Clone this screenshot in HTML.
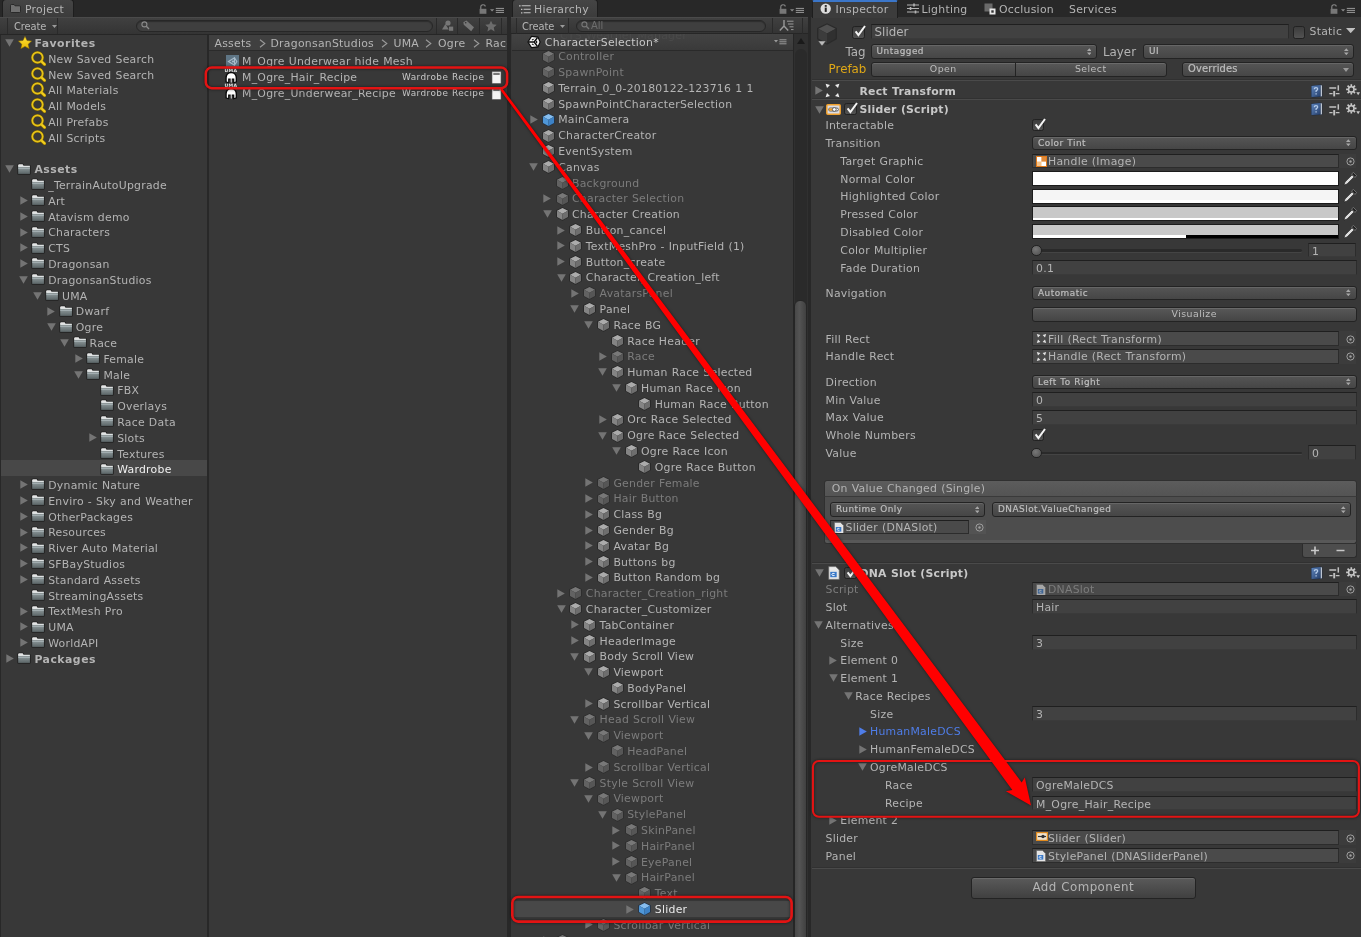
<!DOCTYPE html><html><head><meta charset="utf-8"><title>Unity Editor</title><style>
*{box-sizing:border-box}
html,body{margin:0;padding:0}
body{width:1361px;height:937px;overflow:hidden;background:#282828;position:relative;
font:10.87px "DejaVu Sans","Liberation Sans",sans-serif;color:#b4b4b4;letter-spacing:.26px;word-spacing:.3px}
#root{left:0;top:0;width:1361px;height:937px;will-change:transform}
div,span,svg{position:absolute}
span{white-space:nowrap;margin-top:.9px}
.b{letter-spacing:.22px}
.pan{background:#383838;overflow:hidden}
.r{left:0;right:0;height:15.75px;line-height:15.75px}
.ir{left:0;right:0;height:17.78px;line-height:17.78px}
.dim{color:#7c7c7c}
.b{font-weight:bold}
.tab{top:-1px;height:19px;border:1px solid #1e1e1e;border-bottom:0;border-radius:4px 4px 0 0;background:linear-gradient(#454545,#3b3b3b);line-height:16px}
.tb{left:0;right:0;top:17px;height:17.5px;background:linear-gradient(#404040,#343434);border-top:1px solid #4a4a4a;border-bottom:1px solid #262626;line-height:15px;font-size:9.9px;letter-spacing:-.08px}
.sf{border-radius:7px;background:#3f3f3f;border:1px solid #272727;box-shadow:inset 0 1px 1px #2d2d2d}
.tf{background:#414141;border:1px solid #2c2c2c;border-top-color:#1f1f1f;border-bottom-color:#3a3a3a;height:14.8px;line-height:16px;padding-left:3px;color:#b4b4b4}
.pop{background:linear-gradient(#555,#464646);border:1px solid #232323;border-radius:3px;height:14.6px;line-height:12.4px;font-size:8.9px;letter-spacing:.35px;padding-left:5px;color:#bebebe;box-shadow:inset 0 1px 0 #666;-webkit-text-stroke:.2px #bebebe;letter-spacing:.5px}
.btn{background:linear-gradient(#585858,#454545);border:1px solid #232323;border-radius:3px;height:14.6px;line-height:12.4px;font-size:9.4px;letter-spacing:.45px;text-align:center;color:#bebebe;box-shadow:inset 0 1px 0 #6a6a6a}
.cb{width:12.4px;height:12.4px;border:1px solid #222;border-radius:2.5px;background:linear-gradient(#3c3c3c,#525252)}
.sep{left:0;right:0;height:1px;background:#313131;box-shadow:0 1px 0 #4a4a4a}
.of{background:#4a4a4a;border:1px solid #2c2c2c;border-top-color:#1f1f1f;height:14.8px;line-height:13px;overflow:hidden}
.col{height:14.9px;border:1px solid #1c1c1c}
</style></head><body>
<div id="root">

<svg width="0" height="0" style="left:0;top:0"><defs>
<linearGradient id="fg" x1="0" y1="0" x2="0" y2="1"><stop offset="0" stop-color="#919c9e"/><stop offset="1" stop-color="#5b6567"/></linearGradient>
<linearGradient id="yg" x1="0" y1="0" x2="0" y2="1"><stop offset="0" stop-color="#ffe23a"/><stop offset="1" stop-color="#e9b900"/></linearGradient>
<symbol id="cube" viewBox="0 0 13 14"><path d="M6.5 .2 12.8 3.2V10.3L6.5 13.8 .2 10.3V3.2Z" fill="#262626"/><path d="M6.5 1 12 3.7 6.5 6.7 1 3.7Z" fill="#ababab"/><path d="M1 3.7 6.5 6.7V13L1 9.9Z" fill="#848484"/><path d="M12 3.7 6.5 6.7V13L12 9.9Z" fill="#6e6e6e"/></symbol>
<symbol id="cubed" viewBox="0 0 13 14"><path d="M6.5 .2 12.8 3.2V10.3L6.5 13.8 .2 10.3V3.2Z" fill="#2c2c2c"/><path d="M6.5 1 12 3.7 6.5 6.7 1 3.7Z" fill="#787878"/><path d="M1 3.7 6.5 6.7V13L1 9.9Z" fill="#626262"/><path d="M12 3.7 6.5 6.7V13L12 9.9Z" fill="#565656"/></symbol>
<symbol id="cubeb" viewBox="0 0 13 14"><path d="M6.5 .2 12.8 3.2V10.3L6.5 13.8 .2 10.3V3.2Z" fill="#223244"/><path d="M6.5 1 12 3.7 6.5 6.7 1 3.7Z" fill="#86bdee"/><path d="M1 3.7 6.5 6.7V13L1 9.9Z" fill="#4f97d8"/><path d="M12 3.7 6.5 6.7V13L12 9.9Z" fill="#3d82c6"/></symbol>
<symbol id="cubek" viewBox="0 0 13 14"><path d="M6.5 .2 12.8 3.2V10.3L6.5 13.8 .2 10.3V3.2Z" fill="#2a2a2a"/><path d="M6.5 1 12 3.7 6.5 6.7 1 3.7Z" fill="#505050"/><path d="M1 3.7 6.5 6.7V13L1 9.9Z" fill="#3c3c3c"/><path d="M12 3.7 6.5 6.7V13L12 9.9Z" fill="#303030"/></symbol>
<symbol id="fold" viewBox="0 0 14 12"><path d="M.3 2.3Q.3 .4 2 .4H5.6Q6.8 .4 7.1 1.9H12.4Q13.8 1.9 13.8 3.2V10.4Q13.8 11.8 12.4 11.8H1.7Q.3 11.8 .3 10.4Z" fill="#212121"/><path d="M1.2 2.2Q1.2 1.2 2.2 1.2H5.3Q6 1.2 6.2 2.2V3.2H1.2Z" fill="#e6e6e6"/><rect x="1.2" y="2.7" width="11.7" height="1.8" fill="#dde1e2"/><rect x="1.2" y="4.2" width="11.7" height="6.7" fill="url(#fg)"/><rect x="1.2" y="4.9" width="11.7" height=".8" fill="#aebabc"/></symbol>
<symbol id="tr" viewBox="0 0 8 9"><path d="M.3 .2 7.8 4.5 .3 8.8Z" fill="#747474"/></symbol>
<symbol id="td" viewBox="0 0 9 8"><path d="M.2 .3H8.8L4.5 7.8Z" fill="#747474"/></symbol>
<symbol id="mag" viewBox="0 0 15 15"><path d="M10.5 10.5 13.6 13.4" stroke="#8a6d00" stroke-width="3.4" stroke-linecap="round"/><circle cx="6.5" cy="6.5" r="5.2" fill="none" stroke="#7a6000" stroke-width="2.6"/><path d="M10.5 10.5 13.6 13.4" stroke="#f2cf1f" stroke-width="2.2" stroke-linecap="round"/><circle cx="6.5" cy="6.5" r="5.2" fill="none" stroke="#e6c31a" stroke-width="1.7"/></symbol>
<symbol id="star" viewBox="0 0 14 13"><path d="M7 .3 9 4.5 13.7 5 10.2 8.2 11.2 12.8 7 10.4 2.8 12.8 3.8 8.2 .3 5 5 4.5Z" fill="url(#yg)" stroke="#7a5e00" stroke-width=".5"/></symbol>
</defs></svg>

<div class="pan" style="left:0;top:0;width:507px;height:937px;background:#282828">
<div class="tab" style="left:2px;width:72px"><span style="left:22px;top:1px">Project</span><svg style="left:7px;top:4px" width="11" height="9" viewBox="0 0 11 9"><path d="M.5 1.5Q.5 .5 1.5 .5H4L5 1.8H9.5Q10.5 1.8 10.5 2.8V7.5Q10.5 8.5 9.5 8.5H1.5Q.5 8.5 .5 7.5Z" fill="#6f6f6f" stroke="#1e1e1e" stroke-width=".8"/></svg></div>
<svg style="left:479px;top:4px" width="28" height="11" viewBox="0 0 28 11"><path d="M1.8 5V3Q1.8 .8 4 .8Q6.2 .8 6.2 2.6" fill="none" stroke="#8a8a8a" stroke-width="1.1"/><rect x=".6" y="4.8" width="6.8" height="5" fill="#777"/><path d="M11 5.2H15.2L13.1 7.6Z" fill="#8a8a8a"/><path d="M16.8 4.4H25M16.8 6.4H25M16.8 8.4H25" stroke="#9a9a9a" stroke-width="1"/></svg>
<div class="tb"><div style="left:7px;top:0;width:51px;height:16px;border-left:1px solid #2a2a2a;border-right:1px solid #2a2a2a"></div><span style="left:14px;top:0">Create</span><svg style="left:52px;top:6.5px" width="5" height="3" viewBox="0 0 5 3"><path d="M0 0H5L2.5 3Z" fill="#9a9a9a"/></svg><div class="sf" style="left:136px;top:1.5px;width:297px;height:12.5px"></div><svg style="left:141px;top:3px" width="9" height="9" viewBox="0 0 9 9"><circle cx="3.4" cy="3.4" r="2.5" fill="none" stroke="#8a8a8a" stroke-width="1.1"/><path d="M5.3 5.3 8 8" stroke="#8a8a8a" stroke-width="1.3"/></svg><div style="left:435.5px;top:0;width:1px;height:16px;background:#2a2a2a"></div><div style="left:457px;top:0;width:1px;height:16px;background:#2a2a2a"></div><div style="left:479px;top:0;width:1px;height:16px;background:#2a2a2a"></div><div style="left:501px;top:0;width:1px;height:16px;background:#2a2a2a"></div><svg style="left:442px;top:2px" width="12" height="12" viewBox="0 0 12 12"><circle cx="6" cy="3" r="2.6" fill="#767676"/><path d="M0 9.5 3.4 4 6.8 9.5Z" fill="#767676"/><rect x="7" y="6.6" width="4.2" height="4.2" fill="#767676"/></svg><svg style="left:463px;top:2px" width="12" height="12" viewBox="0 0 12 12"><path d="M.3 2.2 3.4 .6 11 7.2 8.2 11.2 .8 4.8Z" fill="#767676"/><circle cx="2.7" cy="2.7" r=".8" fill="#333"/></svg><svg style="left:485px;top:2px" width="12" height="12" viewBox="0 0 14 13"><path d="M7 .3 9 4.5 13.7 5 10.2 8.2 11.2 12.8 7 10.4 2.8 12.8 3.8 8.2 .3 5 5 4.5Z" fill="#6c6c6c"/></svg></div>
<div style="left:1px;top:35px;width:206px;height:902px;background:#383838">
<div class="r" style="top:-1.10px">
<svg style="left:4.2px;top:5.2px" width="9" height="8"><use href="#td"/></svg>
<svg style="left:17.0px;top:2.0px" width="14" height="13"><use href="#star"/></svg>
<span class="b"  style="top:1.2px;left:33.4px;letter-spacing:.5px">Favorites</span>
</div>
<div class="r" style="top:14.69px">
<svg style="left:30.0px;top:1.2px" width="15" height="15"><use href="#mag"/></svg>
<span style="top:1.2px;left:47.2px">New Saved Search</span>
</div>
<div class="r" style="top:30.48px">
<svg style="left:30.0px;top:1.2px" width="15" height="15"><use href="#mag"/></svg>
<span style="top:1.2px;left:47.2px">New Saved Search</span>
</div>
<div class="r" style="top:46.27px">
<svg style="left:30.0px;top:1.2px" width="15" height="15"><use href="#mag"/></svg>
<span style="top:1.2px;left:47.2px">All Materials</span>
</div>
<div class="r" style="top:62.06px">
<svg style="left:30.0px;top:1.2px" width="15" height="15"><use href="#mag"/></svg>
<span style="top:1.2px;left:47.2px">All Models</span>
</div>
<div class="r" style="top:77.85px">
<svg style="left:30.0px;top:1.2px" width="15" height="15"><use href="#mag"/></svg>
<span style="top:1.2px;left:47.2px">All Prefabs</span>
</div>
<div class="r" style="top:93.64px">
<svg style="left:30.0px;top:1.2px" width="15" height="15"><use href="#mag"/></svg>
<span style="top:1.2px;left:47.2px">All Scripts</span>
</div>
<div class="r" style="top:125.22px">
<svg style="left:4.2px;top:5.2px" width="9" height="8"><use href="#td"/></svg>
<svg style="left:16.4px;top:2.4px" width="14" height="12"><use href="#fold"/></svg>
<span class="b"  style="top:1.2px;left:33.4px;letter-spacing:.5px">Assets</span>
</div>
<div class="r" style="top:141.01px">
<svg style="left:30.2px;top:2.4px" width="14" height="12"><use href="#fold"/></svg>
<span style="top:1.2px;left:47.2px">_TerrainAutoUpgrade</span>
</div>
<div class="r" style="top:156.80px">
<svg style="left:18.6px;top:4.2px" width="8" height="9"><use href="#tr"/></svg>
<svg style="left:30.2px;top:2.4px" width="14" height="12"><use href="#fold"/></svg>
<span style="top:1.2px;left:47.2px">Art</span>
</div>
<div class="r" style="top:172.59px">
<svg style="left:18.6px;top:4.2px" width="8" height="9"><use href="#tr"/></svg>
<svg style="left:30.2px;top:2.4px" width="14" height="12"><use href="#fold"/></svg>
<span style="top:1.2px;left:47.2px">Atavism demo</span>
</div>
<div class="r" style="top:188.38px">
<svg style="left:18.6px;top:4.2px" width="8" height="9"><use href="#tr"/></svg>
<svg style="left:30.2px;top:2.4px" width="14" height="12"><use href="#fold"/></svg>
<span style="top:1.2px;left:47.2px">Characters</span>
</div>
<div class="r" style="top:204.17px">
<svg style="left:18.6px;top:4.2px" width="8" height="9"><use href="#tr"/></svg>
<svg style="left:30.2px;top:2.4px" width="14" height="12"><use href="#fold"/></svg>
<span style="top:1.2px;left:47.2px">CTS</span>
</div>
<div class="r" style="top:219.96px">
<svg style="left:18.6px;top:4.2px" width="8" height="9"><use href="#tr"/></svg>
<svg style="left:30.2px;top:2.4px" width="14" height="12"><use href="#fold"/></svg>
<span style="top:1.2px;left:47.2px">Dragonsan</span>
</div>
<div class="r" style="top:235.75px">
<svg style="left:18.0px;top:5.2px" width="9" height="8"><use href="#td"/></svg>
<svg style="left:30.2px;top:2.4px" width="14" height="12"><use href="#fold"/></svg>
<span style="top:1.2px;left:47.2px">DragonsanStudios</span>
</div>
<div class="r" style="top:251.54px">
<svg style="left:31.8px;top:5.2px" width="9" height="8"><use href="#td"/></svg>
<svg style="left:44.0px;top:2.4px" width="14" height="12"><use href="#fold"/></svg>
<span style="top:1.2px;left:61.0px">UMA</span>
</div>
<div class="r" style="top:267.33px">
<svg style="left:46.2px;top:4.2px" width="8" height="9"><use href="#tr"/></svg>
<svg style="left:57.8px;top:2.4px" width="14" height="12"><use href="#fold"/></svg>
<span style="top:1.2px;left:74.8px">Dwarf</span>
</div>
<div class="r" style="top:283.12px">
<svg style="left:45.6px;top:5.2px" width="9" height="8"><use href="#td"/></svg>
<svg style="left:57.8px;top:2.4px" width="14" height="12"><use href="#fold"/></svg>
<span style="top:1.2px;left:74.8px">Ogre</span>
</div>
<div class="r" style="top:298.91px">
<svg style="left:59.4px;top:5.2px" width="9" height="8"><use href="#td"/></svg>
<svg style="left:71.6px;top:2.4px" width="14" height="12"><use href="#fold"/></svg>
<span style="top:1.2px;left:88.6px">Race</span>
</div>
<div class="r" style="top:314.70px">
<svg style="left:73.8px;top:4.2px" width="8" height="9"><use href="#tr"/></svg>
<svg style="left:85.4px;top:2.4px" width="14" height="12"><use href="#fold"/></svg>
<span style="top:1.2px;left:102.4px">Female</span>
</div>
<div class="r" style="top:330.49px">
<svg style="left:73.2px;top:5.2px" width="9" height="8"><use href="#td"/></svg>
<svg style="left:85.4px;top:2.4px" width="14" height="12"><use href="#fold"/></svg>
<span style="top:1.2px;left:102.4px">Male</span>
</div>
<div class="r" style="top:346.28px">
<svg style="left:99.2px;top:2.4px" width="14" height="12"><use href="#fold"/></svg>
<span style="top:1.2px;left:116.2px">FBX</span>
</div>
<div class="r" style="top:362.07px">
<svg style="left:99.2px;top:2.4px" width="14" height="12"><use href="#fold"/></svg>
<span style="top:1.2px;left:116.2px">Overlays</span>
</div>
<div class="r" style="top:377.86px">
<svg style="left:99.2px;top:2.4px" width="14" height="12"><use href="#fold"/></svg>
<span style="top:1.2px;left:116.2px">Race Data</span>
</div>
<div class="r" style="top:393.65px">
<svg style="left:87.6px;top:4.2px" width="8" height="9"><use href="#tr"/></svg>
<svg style="left:99.2px;top:2.4px" width="14" height="12"><use href="#fold"/></svg>
<span style="top:1.2px;left:116.2px">Slots</span>
</div>
<div class="r" style="top:409.44px">
<svg style="left:99.2px;top:2.4px" width="14" height="12"><use href="#fold"/></svg>
<span style="top:1.2px;left:116.2px">Textures</span>
</div>
<div class="r" style="top:425.23px;background:#484848">
<svg style="left:99.2px;top:2.4px" width="14" height="12"><use href="#fold"/></svg>
<span style="color:#f0f0f0;top:1.2px;left:116.2px">Wardrobe</span>
</div>
<div class="r" style="top:441.02px">
<svg style="left:18.6px;top:4.2px" width="8" height="9"><use href="#tr"/></svg>
<svg style="left:30.2px;top:2.4px" width="14" height="12"><use href="#fold"/></svg>
<span style="top:1.2px;left:47.2px">Dynamic Nature</span>
</div>
<div class="r" style="top:456.81px">
<svg style="left:18.6px;top:4.2px" width="8" height="9"><use href="#tr"/></svg>
<svg style="left:30.2px;top:2.4px" width="14" height="12"><use href="#fold"/></svg>
<span style="top:1.2px;left:47.2px">Enviro - Sky and Weather</span>
</div>
<div class="r" style="top:472.60px">
<svg style="left:18.6px;top:4.2px" width="8" height="9"><use href="#tr"/></svg>
<svg style="left:30.2px;top:2.4px" width="14" height="12"><use href="#fold"/></svg>
<span style="top:1.2px;left:47.2px">OtherPackages</span>
</div>
<div class="r" style="top:488.39px">
<svg style="left:18.6px;top:4.2px" width="8" height="9"><use href="#tr"/></svg>
<svg style="left:30.2px;top:2.4px" width="14" height="12"><use href="#fold"/></svg>
<span style="top:1.2px;left:47.2px">Resources</span>
</div>
<div class="r" style="top:504.18px">
<svg style="left:18.6px;top:4.2px" width="8" height="9"><use href="#tr"/></svg>
<svg style="left:30.2px;top:2.4px" width="14" height="12"><use href="#fold"/></svg>
<span style="top:1.2px;left:47.2px">River Auto Material</span>
</div>
<div class="r" style="top:519.97px">
<svg style="left:18.6px;top:4.2px" width="8" height="9"><use href="#tr"/></svg>
<svg style="left:30.2px;top:2.4px" width="14" height="12"><use href="#fold"/></svg>
<span style="top:1.2px;left:47.2px">SFBayStudios</span>
</div>
<div class="r" style="top:535.76px">
<svg style="left:18.6px;top:4.2px" width="8" height="9"><use href="#tr"/></svg>
<svg style="left:30.2px;top:2.4px" width="14" height="12"><use href="#fold"/></svg>
<span style="top:1.2px;left:47.2px">Standard Assets</span>
</div>
<div class="r" style="top:551.55px">
<svg style="left:30.2px;top:2.4px" width="14" height="12"><use href="#fold"/></svg>
<span style="top:1.2px;left:47.2px">StreamingAssets</span>
</div>
<div class="r" style="top:567.34px">
<svg style="left:18.6px;top:4.2px" width="8" height="9"><use href="#tr"/></svg>
<svg style="left:30.2px;top:2.4px" width="14" height="12"><use href="#fold"/></svg>
<span style="top:1.2px;left:47.2px">TextMesh Pro</span>
</div>
<div class="r" style="top:583.13px">
<svg style="left:18.6px;top:4.2px" width="8" height="9"><use href="#tr"/></svg>
<svg style="left:30.2px;top:2.4px" width="14" height="12"><use href="#fold"/></svg>
<span style="top:1.2px;left:47.2px">UMA</span>
</div>
<div class="r" style="top:598.92px">
<svg style="left:18.6px;top:4.2px" width="8" height="9"><use href="#tr"/></svg>
<svg style="left:30.2px;top:2.4px" width="14" height="12"><use href="#fold"/></svg>
<span style="top:1.2px;left:47.2px">WorldAPI</span>
</div>
<div class="r" style="top:614.71px">
<svg style="left:4.8px;top:4.2px" width="8" height="9"><use href="#tr"/></svg>
<svg style="left:16.4px;top:2.4px" width="14" height="12"><use href="#fold"/></svg>
<span class="b"  style="top:1.2px;left:33.4px;letter-spacing:.5px">Packages</span>
</div>
</div>
<div style="left:208.5px;top:35px;width:298.5px;height:902px;background:#383838">
<div style="left:0;top:0;right:0;height:16px;background:#404040;border-bottom:1px solid #2b2b2b;line-height:15.5px;overflow:hidden">
<span style="left:6px">Assets</span>
<span style="left:62px">DragonsanStudios</span>
<span style="left:185px">UMA</span>
<span style="left:229.5px">Ogre</span>
<span style="left:277px">Race</span>
<svg style="left:50.5px;top:4px" width="7" height="9" viewBox="0 0 7 9"><path d="M1 .8 5.8 4.5 1 8.2" fill="none" stroke="#9a9a9a" stroke-width="1.1"/></svg>
<svg style="left:172.5px;top:4px" width="7" height="9" viewBox="0 0 7 9"><path d="M1 .8 5.8 4.5 1 8.2" fill="none" stroke="#9a9a9a" stroke-width="1.1"/></svg>
<svg style="left:216.5px;top:4px" width="7" height="9" viewBox="0 0 7 9"><path d="M1 .8 5.8 4.5 1 8.2" fill="none" stroke="#9a9a9a" stroke-width="1.1"/></svg>
<svg style="left:264.5px;top:4px" width="7" height="9" viewBox="0 0 7 9"><path d="M1 .8 5.8 4.5 1 8.2" fill="none" stroke="#9a9a9a" stroke-width="1.1"/></svg>
</div>
<div class="r" style="top:18.50px">
<svg style="left:17.5px;top:1.5px" width="13" height="13" viewBox="0 0 13 13"><rect width="13" height="13" fill="#5f7686"/><path d="M2.5 6.5 8.5 2.8V10.2Z M8.5 2.8 10.8 6.5 8.5 10.2" fill="none" stroke="#a9bccb" stroke-width="1.1"/><circle cx="7" cy="6.5" r="1.1" fill="#a9bccb"/></svg>
<span style="left:33.5px">M_Ogre Underwear hide Mesh</span>
</div>
<div class="r" style="top:34.25px">
<svg style="left:16.6px;top:3.2px" width="12.4" height="11.6" viewBox="0 0 12 11"><path d="M6 0C2.4 0 .4 2.4 .4 5.6V9.9L4.1 11V7.4H5V10.6H7V7.4H7.9V11L11.6 9.9V5.6C11.6 2.4 9.6 0 6 0Z" fill="#0a0a0a"/><path d="M6 1.2C3.2 1.2 1.7 3.1 1.7 5.7V9.1L3 9.5V6.2H9V9.5L10.3 9.1V5.7C10.3 3.1 8.8 1.2 6 1.2Z" fill="#fff"/><rect x="5.5" y="5.6" width="1" height="4.6" fill="#fff"/></svg>
<span style="left:16px;top:-6.6px;font-size:4.6px;font-weight:bold;color:#f2f2f2;letter-spacing:.3px;margin:0">UMA</span>
<span style="left:33.5px">M_Ogre_Hair_Recipe</span>
<span style="left:193.5px;font-size:8.9px;letter-spacing:.45px;color:#c8c8c8">Wardrobe Recipe</span>
<svg style="left:282px;top:1.5px" width="11" height="13" viewBox="0 0 11 13"><path d="M1 .5H10V12.5H1Z" fill="#f4f4f4" stroke="#555" stroke-width=".6"/><rect x="2.3" y="1.8" width="6.4" height="2.2" fill="#777"/></svg>
</div>
<div class="r" style="top:50.00px">
<svg style="left:16.6px;top:3.2px" width="12.4" height="11.6" viewBox="0 0 12 11"><path d="M6 0C2.4 0 .4 2.4 .4 5.6V9.9L4.1 11V7.4H5V10.6H7V7.4H7.9V11L11.6 9.9V5.6C11.6 2.4 9.6 0 6 0Z" fill="#0a0a0a"/><path d="M6 1.2C3.2 1.2 1.7 3.1 1.7 5.7V9.1L3 9.5V6.2H9V9.5L10.3 9.1V5.7C10.3 3.1 8.8 1.2 6 1.2Z" fill="#fff"/><rect x="5.5" y="5.6" width="1" height="4.6" fill="#fff"/></svg>
<span style="left:16px;top:-6.6px;font-size:4.6px;font-weight:bold;color:#f2f2f2;letter-spacing:.3px;margin:0">UMA</span>
<span style="left:33.5px">M_Ogre_Underwear_Recipe</span>
<span style="left:193.5px;font-size:8.9px;letter-spacing:.45px;color:#c8c8c8">Wardrobe Recipe</span>
<svg style="left:282px;top:1.5px" width="11" height="13" viewBox="0 0 11 13"><path d="M1 .5H10V12.5H1Z" fill="#f4f4f4" stroke="#555" stroke-width=".6"/><rect x="2.3" y="1.8" width="6.4" height="2.2" fill="#777"/></svg>
</div>
</div>
</div>
<div class="pan" style="left:511px;top:0;width:297px;height:937px;background:#282828">
<div class="tab" style="left:.5px;width:86px"><span style="left:21.5px;top:1px">Hierarchy</span><svg style="left:6.5px;top:5px" width="12" height="9" viewBox="0 0 12 9"><path d="M0 .8H1.6M2 4.3H3.4M2 7.8H3.4" stroke="#c4c4c4" stroke-width="1.3"/><path d="M2.6 .8H11.6M4.6 4.3H11.6M4.6 7.8H11.6" stroke="#c4c4c4" stroke-width="1.1"/></svg></div>
<svg style="left:268px;top:4px" width="28" height="11" viewBox="0 0 28 11"><path d="M1.8 5V3Q1.8 .8 4 .8Q6.2 .8 6.2 2.6" fill="none" stroke="#8a8a8a" stroke-width="1.1"/><rect x=".6" y="4.8" width="6.8" height="5" fill="#777"/><path d="M11 5.2H15.2L13.1 7.6Z" fill="#8a8a8a"/><path d="M16.8 4.4H25M16.8 6.4H25M16.8 8.4H25" stroke="#9a9a9a" stroke-width="1"/></svg>
<div class="tb" style="height:17px"><div style="left:5px;top:0;width:1px;height:16px;background:#2a2a2a"></div><span style="left:11px;top:0">Create</span><svg style="left:48.5px;top:6.5px" width="5" height="3" viewBox="0 0 5 3"><path d="M0 0H5L2.5 3Z" fill="#9a9a9a"/></svg><div style="left:57px;top:0;width:1px;height:16px;background:#2a2a2a"></div><div class="sf" style="left:65px;top:1.5px;width:190px;height:12.5px"></div><svg style="left:70px;top:3px" width="9" height="9" viewBox="0 0 9 9"><circle cx="3.4" cy="3.4" r="2.5" fill="none" stroke="#777" stroke-width="1.1"/><path d="M5.3 5.3 8 8" stroke="#777" stroke-width="1.3"/></svg><span style="left:80px;top:-0.5px;color:#6e6e6e;font-size:10px">All</span><div style="left:261px;top:0;width:1px;height:16px;background:#2a2a2a"></div><div style="left:290.5px;top:0;width:1px;height:16px;background:#2a2a2a"></div><svg style="left:268px;top:2px" width="15" height="12" viewBox="0 0 15 12"><path d="M5 0V6M5 6 .8 10.5M5 6 9.2 10.5" stroke="#999" stroke-width="1.4" fill="none"/><path d="M8 1.2H14.5M9 4H14.5M10.5 6.8H14.5M12 9.6H14.5" stroke="#999" stroke-width="1"/></svg></div>
<div style="left:0;top:34px;width:297px;height:903px;background:#383838;overflow:hidden"><div style="left:1px;top:0;width:296px;height:903px">
<div class="r" style="top:14.40px">
<svg style="left:29.8px;top:1.2px" width="13" height="14"><use href="#cubed"/></svg>
<span class="dim" style="left:46.2px">Controller</span>
</div>
<div class="r" style="top:30.19px">
<svg style="left:29.8px;top:1.2px" width="13" height="14"><use href="#cubed"/></svg>
<span class="dim" style="left:46.2px">SpawnPoint</span>
</div>
<div class="r" style="top:45.98px">
<svg style="left:29.8px;top:1.2px" width="13" height="14"><use href="#cube"/></svg>
<span style="left:46.2px">Terrain_0_0-20180122-123716 1 1</span>
</div>
<div class="r" style="top:61.77px">
<svg style="left:29.8px;top:1.2px" width="13" height="14"><use href="#cube"/></svg>
<span style="left:46.2px">SpawnPointCharacterSelection</span>
</div>
<div class="r" style="top:77.56px">
<svg style="left:17.6px;top:3.6px" width="8" height="9"><use href="#tr"/></svg>
<svg style="left:29.8px;top:1.2px" width="13" height="14"><use href="#cubeb"/></svg>
<span style="left:46.2px">MainCamera</span>
</div>
<div class="r" style="top:93.35px">
<svg style="left:29.8px;top:1.2px" width="13" height="14"><use href="#cube"/></svg>
<span style="left:46.2px">CharacterCreator</span>
</div>
<div class="r" style="top:109.14px">
<svg style="left:29.8px;top:1.2px" width="13" height="14"><use href="#cube"/></svg>
<span style="left:46.2px">EventSystem</span>
</div>
<div class="r" style="top:124.93px">
<svg style="left:17.0px;top:4.2px" width="9" height="8"><use href="#td"/></svg>
<svg style="left:29.8px;top:1.2px" width="13" height="14"><use href="#cube"/></svg>
<span style="left:46.2px">Canvas</span>
</div>
<div class="r" style="top:140.72px">
<svg style="left:43.6px;top:1.2px" width="13" height="14"><use href="#cubed"/></svg>
<span class="dim" style="left:60.0px">Background</span>
</div>
<div class="r" style="top:156.51px">
<svg style="left:31.4px;top:3.6px" width="8" height="9"><use href="#tr"/></svg>
<svg style="left:43.6px;top:1.2px" width="13" height="14"><use href="#cubed"/></svg>
<span class="dim" style="left:60.0px">Character Selection</span>
</div>
<div class="r" style="top:172.30px">
<svg style="left:30.8px;top:4.2px" width="9" height="8"><use href="#td"/></svg>
<svg style="left:43.6px;top:1.2px" width="13" height="14"><use href="#cube"/></svg>
<span style="left:60.0px">Character Creation</span>
</div>
<div class="r" style="top:188.09px">
<svg style="left:45.2px;top:3.6px" width="8" height="9"><use href="#tr"/></svg>
<svg style="left:57.4px;top:1.2px" width="13" height="14"><use href="#cube"/></svg>
<span style="left:73.8px">Button_cancel</span>
</div>
<div class="r" style="top:203.88px">
<svg style="left:45.2px;top:3.6px" width="8" height="9"><use href="#tr"/></svg>
<svg style="left:57.4px;top:1.2px" width="13" height="14"><use href="#cube"/></svg>
<span style="left:73.8px">TextMeshPro - InputField (1)</span>
</div>
<div class="r" style="top:219.67px">
<svg style="left:45.2px;top:3.6px" width="8" height="9"><use href="#tr"/></svg>
<svg style="left:57.4px;top:1.2px" width="13" height="14"><use href="#cube"/></svg>
<span style="left:73.8px">Button_create</span>
</div>
<div class="r" style="top:235.46px">
<svg style="left:44.6px;top:4.2px" width="9" height="8"><use href="#td"/></svg>
<svg style="left:57.4px;top:1.2px" width="13" height="14"><use href="#cube"/></svg>
<span style="left:73.8px">Character_Creation_left</span>
</div>
<div class="r" style="top:251.25px">
<svg style="left:59.0px;top:3.6px" width="8" height="9"><use href="#tr"/></svg>
<svg style="left:71.2px;top:1.2px" width="13" height="14"><use href="#cubed"/></svg>
<span class="dim" style="left:87.6px">AvatarsPanel</span>
</div>
<div class="r" style="top:267.04px">
<svg style="left:58.4px;top:4.2px" width="9" height="8"><use href="#td"/></svg>
<svg style="left:71.2px;top:1.2px" width="13" height="14"><use href="#cube"/></svg>
<span style="left:87.6px">Panel</span>
</div>
<div class="r" style="top:282.83px">
<svg style="left:72.2px;top:4.2px" width="9" height="8"><use href="#td"/></svg>
<svg style="left:85.0px;top:1.2px" width="13" height="14"><use href="#cube"/></svg>
<span style="left:101.4px">Race BG</span>
</div>
<div class="r" style="top:298.62px">
<svg style="left:98.8px;top:1.2px" width="13" height="14"><use href="#cube"/></svg>
<span style="left:115.2px">Race Header</span>
</div>
<div class="r" style="top:314.41px">
<svg style="left:86.6px;top:3.6px" width="8" height="9"><use href="#tr"/></svg>
<svg style="left:98.8px;top:1.2px" width="13" height="14"><use href="#cubed"/></svg>
<span class="dim" style="left:115.2px">Race</span>
</div>
<div class="r" style="top:330.20px">
<svg style="left:86.0px;top:4.2px" width="9" height="8"><use href="#td"/></svg>
<svg style="left:98.8px;top:1.2px" width="13" height="14"><use href="#cube"/></svg>
<span style="left:115.2px">Human Race Selected</span>
</div>
<div class="r" style="top:345.99px">
<svg style="left:99.8px;top:4.2px" width="9" height="8"><use href="#td"/></svg>
<svg style="left:112.6px;top:1.2px" width="13" height="14"><use href="#cube"/></svg>
<span style="left:129.0px">Human Race Icon</span>
</div>
<div class="r" style="top:361.78px">
<svg style="left:126.4px;top:1.2px" width="13" height="14"><use href="#cube"/></svg>
<span style="left:142.8px">Human Race Button</span>
</div>
<div class="r" style="top:377.57px">
<svg style="left:86.6px;top:3.6px" width="8" height="9"><use href="#tr"/></svg>
<svg style="left:98.8px;top:1.2px" width="13" height="14"><use href="#cube"/></svg>
<span style="left:115.2px">Orc Race Selected</span>
</div>
<div class="r" style="top:393.36px">
<svg style="left:86.0px;top:4.2px" width="9" height="8"><use href="#td"/></svg>
<svg style="left:98.8px;top:1.2px" width="13" height="14"><use href="#cube"/></svg>
<span style="left:115.2px">Ogre Race Selected</span>
</div>
<div class="r" style="top:409.15px">
<svg style="left:99.8px;top:4.2px" width="9" height="8"><use href="#td"/></svg>
<svg style="left:112.6px;top:1.2px" width="13" height="14"><use href="#cube"/></svg>
<span style="left:129.0px">Ogre Race Icon</span>
</div>
<div class="r" style="top:424.94px">
<svg style="left:126.4px;top:1.2px" width="13" height="14"><use href="#cube"/></svg>
<span style="left:142.8px">Ogre Race Button</span>
</div>
<div class="r" style="top:440.73px">
<svg style="left:72.8px;top:3.6px" width="8" height="9"><use href="#tr"/></svg>
<svg style="left:85.0px;top:1.2px" width="13" height="14"><use href="#cubed"/></svg>
<span class="dim" style="left:101.4px">Gender Female</span>
</div>
<div class="r" style="top:456.52px">
<svg style="left:72.8px;top:3.6px" width="8" height="9"><use href="#tr"/></svg>
<svg style="left:85.0px;top:1.2px" width="13" height="14"><use href="#cubed"/></svg>
<span class="dim" style="left:101.4px">Hair Button</span>
</div>
<div class="r" style="top:472.31px">
<svg style="left:72.8px;top:3.6px" width="8" height="9"><use href="#tr"/></svg>
<svg style="left:85.0px;top:1.2px" width="13" height="14"><use href="#cube"/></svg>
<span style="left:101.4px">Class Bg</span>
</div>
<div class="r" style="top:488.10px">
<svg style="left:72.8px;top:3.6px" width="8" height="9"><use href="#tr"/></svg>
<svg style="left:85.0px;top:1.2px" width="13" height="14"><use href="#cube"/></svg>
<span style="left:101.4px">Gender Bg</span>
</div>
<div class="r" style="top:503.89px">
<svg style="left:72.8px;top:3.6px" width="8" height="9"><use href="#tr"/></svg>
<svg style="left:85.0px;top:1.2px" width="13" height="14"><use href="#cube"/></svg>
<span style="left:101.4px">Avatar Bg</span>
</div>
<div class="r" style="top:519.68px">
<svg style="left:72.8px;top:3.6px" width="8" height="9"><use href="#tr"/></svg>
<svg style="left:85.0px;top:1.2px" width="13" height="14"><use href="#cube"/></svg>
<span style="left:101.4px">Buttons bg</span>
</div>
<div class="r" style="top:535.47px">
<svg style="left:72.8px;top:3.6px" width="8" height="9"><use href="#tr"/></svg>
<svg style="left:85.0px;top:1.2px" width="13" height="14"><use href="#cube"/></svg>
<span style="left:101.4px">Button Random bg</span>
</div>
<div class="r" style="top:551.26px">
<svg style="left:45.2px;top:3.6px" width="8" height="9"><use href="#tr"/></svg>
<svg style="left:57.4px;top:1.2px" width="13" height="14"><use href="#cubed"/></svg>
<span class="dim" style="left:73.8px">Character_Creation_right</span>
</div>
<div class="r" style="top:567.05px">
<svg style="left:44.6px;top:4.2px" width="9" height="8"><use href="#td"/></svg>
<svg style="left:57.4px;top:1.2px" width="13" height="14"><use href="#cube"/></svg>
<span style="left:73.8px">Character_Customizer</span>
</div>
<div class="r" style="top:582.84px">
<svg style="left:59.0px;top:3.6px" width="8" height="9"><use href="#tr"/></svg>
<svg style="left:71.2px;top:1.2px" width="13" height="14"><use href="#cube"/></svg>
<span style="left:87.6px">TabContainer</span>
</div>
<div class="r" style="top:598.63px">
<svg style="left:59.0px;top:3.6px" width="8" height="9"><use href="#tr"/></svg>
<svg style="left:71.2px;top:1.2px" width="13" height="14"><use href="#cube"/></svg>
<span style="left:87.6px">HeaderImage</span>
</div>
<div class="r" style="top:614.42px">
<svg style="left:58.4px;top:4.2px" width="9" height="8"><use href="#td"/></svg>
<svg style="left:71.2px;top:1.2px" width="13" height="14"><use href="#cube"/></svg>
<span style="left:87.6px">Body Scroll View</span>
</div>
<div class="r" style="top:630.21px">
<svg style="left:72.2px;top:4.2px" width="9" height="8"><use href="#td"/></svg>
<svg style="left:85.0px;top:1.2px" width="13" height="14"><use href="#cube"/></svg>
<span style="left:101.4px">Viewport</span>
</div>
<div class="r" style="top:646.00px">
<svg style="left:98.8px;top:1.2px" width="13" height="14"><use href="#cube"/></svg>
<span style="left:115.2px">BodyPanel</span>
</div>
<div class="r" style="top:661.79px">
<svg style="left:72.8px;top:3.6px" width="8" height="9"><use href="#tr"/></svg>
<svg style="left:85.0px;top:1.2px" width="13" height="14"><use href="#cube"/></svg>
<span style="left:101.4px">Scrollbar Vertical</span>
</div>
<div class="r" style="top:677.58px">
<svg style="left:58.4px;top:4.2px" width="9" height="8"><use href="#td"/></svg>
<svg style="left:71.2px;top:1.2px" width="13" height="14"><use href="#cubed"/></svg>
<span class="dim" style="left:87.6px">Head Scroll View</span>
</div>
<div class="r" style="top:693.37px">
<svg style="left:72.2px;top:4.2px" width="9" height="8"><use href="#td"/></svg>
<svg style="left:85.0px;top:1.2px" width="13" height="14"><use href="#cubed"/></svg>
<span class="dim" style="left:101.4px">Viewport</span>
</div>
<div class="r" style="top:709.16px">
<svg style="left:98.8px;top:1.2px" width="13" height="14"><use href="#cubed"/></svg>
<span class="dim" style="left:115.2px">HeadPanel</span>
</div>
<div class="r" style="top:724.95px">
<svg style="left:72.8px;top:3.6px" width="8" height="9"><use href="#tr"/></svg>
<svg style="left:85.0px;top:1.2px" width="13" height="14"><use href="#cubed"/></svg>
<span class="dim" style="left:101.4px">Scrollbar Vertical</span>
</div>
<div class="r" style="top:740.74px">
<svg style="left:58.4px;top:4.2px" width="9" height="8"><use href="#td"/></svg>
<svg style="left:71.2px;top:1.2px" width="13" height="14"><use href="#cubed"/></svg>
<span class="dim" style="left:87.6px">Style Scroll View</span>
</div>
<div class="r" style="top:756.53px">
<svg style="left:72.2px;top:4.2px" width="9" height="8"><use href="#td"/></svg>
<svg style="left:85.0px;top:1.2px" width="13" height="14"><use href="#cubed"/></svg>
<span class="dim" style="left:101.4px">Viewport</span>
</div>
<div class="r" style="top:772.32px">
<svg style="left:86.0px;top:4.2px" width="9" height="8"><use href="#td"/></svg>
<svg style="left:98.8px;top:1.2px" width="13" height="14"><use href="#cubed"/></svg>
<span class="dim" style="left:115.2px">StylePanel</span>
</div>
<div class="r" style="top:788.11px">
<svg style="left:100.4px;top:3.6px" width="8" height="9"><use href="#tr"/></svg>
<svg style="left:112.6px;top:1.2px" width="13" height="14"><use href="#cubed"/></svg>
<span class="dim" style="left:129.0px">SkinPanel</span>
</div>
<div class="r" style="top:803.90px">
<svg style="left:100.4px;top:3.6px" width="8" height="9"><use href="#tr"/></svg>
<svg style="left:112.6px;top:1.2px" width="13" height="14"><use href="#cubed"/></svg>
<span class="dim" style="left:129.0px">HairPanel</span>
</div>
<div class="r" style="top:819.69px">
<svg style="left:100.4px;top:3.6px" width="8" height="9"><use href="#tr"/></svg>
<svg style="left:112.6px;top:1.2px" width="13" height="14"><use href="#cubed"/></svg>
<span class="dim" style="left:129.0px">EyePanel</span>
</div>
<div class="r" style="top:835.48px">
<svg style="left:99.8px;top:4.2px" width="9" height="8"><use href="#td"/></svg>
<svg style="left:112.6px;top:1.2px" width="13" height="14"><use href="#cubed"/></svg>
<span class="dim" style="left:129.0px">HairPanel</span>
</div>
<div class="r" style="top:851.27px">
<svg style="left:126.4px;top:1.2px" width="13" height="14"><use href="#cubed"/></svg>
<span class="dim" style="left:142.8px">Text</span>
</div>
<div class="r" style="top:867.06px;background:#484848;right:14px">
<svg style="left:114.2px;top:3.6px" width="8" height="9"><use href="#tr"/></svg>
<svg style="left:126.4px;top:1.2px" width="13" height="14"><use href="#cubeb"/></svg>
<span style="left:142.8px;color:#e8e8e8">Slider</span>
</div>
<div class="r" style="top:882.85px">
<svg style="left:72.8px;top:3.6px" width="8" height="9"><use href="#tr"/></svg>
<svg style="left:85.0px;top:1.2px" width="13" height="14"><use href="#cubed"/></svg>
<span class="dim" style="left:101.4px">Scrollbar Vertical</span>
</div>
<div class="r" style="top:898.64px">
<svg style="left:31.4px;top:3.6px" width="8" height="9"><use href="#tr"/></svg>
<svg style="left:43.6px;top:1.2px" width="13" height="14"><use href="#cubed"/></svg>
<span class="dim" style="left:60.0px">Character Spawner</span>
</div>
<div style="left:0;top:0;width:282px;height:16.5px;background:linear-gradient(#434343,#3a3a3a);border-bottom:1px solid #2a2a2a;line-height:16px;overflow:hidden"><span style="left:48px;top:-7px;color:#4a4a4a">CTS Weather Manager</span><svg style="left:14.8px;top:1px" width="14" height="14" viewBox="0 0 14 14"><path d="M.3 7 4.3 .8 11.3 1.6 13.7 7 11.3 12.4 4.3 13.2Z" fill="#0c0c0c"/><path d="M1.6 7 4.8 2 10.6 2.7 12.5 7 10.6 11.3 4.8 12Z" fill="#f4f4f4"/><path d="M7.2 7H1.6M7.2 7 10.4 2.6M7.2 7 10.4 11.4" stroke="#0c0c0c" stroke-width="1.5"/><path d="M4.6 4.4 7.6 3.4 5.6 5.6ZM4.6 9.6 7.6 10.6 5.6 8.4ZM10.6 7 9 5.2V8.8Z" fill="#0c0c0c"/></svg><span style="left:32.8px;top:.2px;color:#c8c8c8">CharacterSelection*</span><svg style="left:262px;top:5px" width="13" height="7" viewBox="0 0 13 7"><path d="M0 1H4L2 3.6Z" fill="#9a9a9a"/><path d="M5.4 .8H12.5M5.4 2.8H12.5M5.4 4.8H12.5" stroke="#9a9a9a" stroke-width="1"/></svg></div>
<div style="left:280.5px;top:0;width:15px;height:903px;background:#303030;border-left:1px solid #262626"><svg style="left:3px;top:4px" width="8" height="6" viewBox="0 0 8 6"><path d="M0 6H8L4 0Z" fill="#1a1a1a"/></svg><div style="left:1px;top:15px;width:12px;height:900px;border-radius:6px;background:#2a2a2a"></div><div style="left:.5px;top:266px;width:13px;height:700px;border-radius:6px;background:linear-gradient(90deg,#484848,#545454 40%,#404040);border:1px solid #262626"></div></div>
</div></div></div>
<div style="left:810.6px;top:17px;width:3px;height:920px;background:#383838"></div>
<div class="pan" style="left:812px;top:0;width:549px;height:937px">
<div style="left:0;top:0;right:0;height:17px;background:#282828"></div>
<div class="tab" style="top:0;left:0;width:85.5px;background:#3c3c3c;border-top:2px solid #3b76c9;border-radius:2px 2px 0 0;height:18px;line-height:14px"><span style="left:22.5px;top:0">Inspector</span><svg style="left:7.2px;top:1.2px" width="11.4" height="11.4" viewBox="0 0 11 11"><circle cx="5.5" cy="5.5" r="5" fill="#dcdcdc"/><rect x="4.6" y="4.4" width="1.9" height="4.2" fill="#222"/><rect x="4.6" y="2" width="1.9" height="1.7" fill="#222"/></svg></div>
<svg style="left:95px;top:3px" width="12" height="11" viewBox="0 0 12 11"><path d="M0 2H12M0 5.5H12M0 9H12" stroke="#b4b4b4" stroke-width="1"/><path d="M7 .5V3.5M3.5 4V7M8.5 7.5V10.5" stroke="#b4b4b4" stroke-width="1.6"/></svg>
<span style="left:109.5px;top:0;line-height:17px">Lighting</span>
<svg style="left:171.5px;top:3px" width="12" height="12" viewBox="0 0 12 12"><rect x=".5" y=".5" width="8" height="8" fill="#6a6a6a"/><rect x="5.5" y="5.5" width="6" height="6" fill="#e8e8e8"/><rect x="7.3" y="7.3" width="2.4" height="2.4" fill="#333"/></svg>
<span style="left:187px;top:0;line-height:17px">Occlusion</span>
<span style="left:257px;top:0;line-height:17px">Services</span>
<svg style="left:518px;top:4px" width="28" height="11" viewBox="0 0 28 11"><path d="M1.8 5V3Q1.8 .8 4 .8Q6.2 .8 6.2 2.6" fill="none" stroke="#8a8a8a" stroke-width="1.1"/><rect x=".6" y="4.8" width="6.8" height="5" fill="#777"/><path d="M11 5.2H15.2L13.1 7.6Z" fill="#8a8a8a"/><path d="M16.8 4.4H25M16.8 6.4H25M16.8 8.4H25" stroke="#9a9a9a" stroke-width="1"/></svg>
<svg style="left:4.2px;top:23.4px" width="22" height="22"><use href="#cubek"/></svg>
<svg style="left:6.2px;top:40.6px" width="8" height="5" viewBox="0 0 8 5"><path d="M0 0H8L4 5Z" fill="#bbb" stroke="#333" stroke-width=".5"/></svg>
<div class="cb" style="left:40.4px;top:26.2px"><svg style="left:.5px;top:-2px" width="13" height="12" viewBox="0 0 13 12"><path d="M1.6 6.4 4.4 10 11 1" fill="none" stroke="#f4f4f4" stroke-width="2"/></svg></div>
<div class="tf" style="left:58.6px;top:24.2px;width:418px;font-size:11.85px;line-height:14.8px;letter-spacing:0">Slider</div>
<div class="cb" style="left:480.6px;top:26.2px"></div>
<span style="left:497.5px;top:23px;line-height:16px">Static</span>
<svg style="left:533.5px;top:28.3px" width="9.4" height="5.2" viewBox="0 0 9 5"><path d="M0 0H9L4.5 5Z" fill="#c0c0c0"/></svg>
<span style="left:33.5px;top:43.5px;font-size:11.85px;letter-spacing:0;line-height:16px">Tag</span>
<div class="pop" style="left:58.6px;top:44px;width:226px">Untagged</div><svg style="left:274.5px;top:47.5px" width="4.6" height="7.4" viewBox="0 0 5 8"><path d="M0 3.2H5L2.5 .2ZM0 4.8H5L2.5 7.8Z" fill="#a8a8a8"/></svg>
<span style="left:291px;top:43.5px;font-size:11.85px;letter-spacing:0;line-height:16px">Layer</span>
<div class="pop" style="left:331px;top:44px;width:211px">UI</div><svg style="left:532px;top:47.5px" width="4.6" height="7.4" viewBox="0 0 5 8"><path d="M0 3.2H5L2.5 .2ZM0 4.8H5L2.5 7.8Z" fill="#a8a8a8"/></svg>
<span style="left:16.6px;top:60.4px;font-size:11.85px;letter-spacing:0;line-height:16px;color:#e0a816">Prefab</span>
<div class="btn" style="left:58.6px;top:62px;width:145.4px;border-radius:3px 0 0 3px">Open</div>
<div class="btn" style="left:203px;top:62px;width:151.5px;border-radius:0 3px 3px 0">Select</div>
<div class="pop" style="left:370px;top:62px;width:172px;font-size:9.9px;letter-spacing:.2px">Overrides</div>
<svg style="left:530.5px;top:68px" width="6" height="4" viewBox="0 0 6 4"><path d="M0 0H6L3 4Z" fill="#999"/></svg>
<div class="sep" style="top:79.2px"></div>
<div class="ir" style="top:81.8px">
<svg style="left:3.4px;top:4.4px" width="8" height="9"><use href="#tr"/></svg>
<svg style="left:13.2px;top:1.5px" width="15" height="15" viewBox="0 0 15 15"><path d="M.6 .8 5 2 2 5ZM14.4 .8 10 2 13 5ZM.6 14.2 5 13 2 10ZM14.4 14.2 10 13 13 10Z" fill="#ececec"/></svg>
<span class="b" style="left:47.5px;color:#c8c8c8">Rect Transform</span>
<svg style="left:498px;top:1.8px" width="13" height="14" viewBox="0 0 13 14"><defs><linearGradient id="bk" x1="0" y1="0" x2="1" y2="1"><stop offset="0" stop-color="#5f86be"/><stop offset="1" stop-color="#263f6b"/></linearGradient></defs><path d="M1 1.8 10.5 .4 12.3 1.2V12.6L2.6 13.6 1 12.6Z" fill="#1c2a40"/><path d="M10.6 .9 11.8 1.5V12.2L10.6 12.6Z" fill="#e8eef6"/><path d="M1.5 2.1 10.4 .9V12.5L1.5 13Z" fill="url(#bk)"/><path d="M4.4 5.2Q4.4 3.6 6 3.6Q7.7 3.6 7.7 5.1Q7.7 6.1 6.1 6.8V8M6.1 9.2V10.4" stroke="#b5cbe8" stroke-width="1.3" fill="none"/></svg>
<svg style="left:517px;top:3px" width="11" height="12" viewBox="0 0 11 12"><path d="M.3 3H7.2M.3 8.6H3.6M6.8 8.6H10.5" stroke="#c2c2c2" stroke-width="1.3"/><path d="M9.3 .3V5.6" stroke="#c2c2c2" stroke-width="1.5"/><path d="M5.2 6V11.4" stroke="#c2c2c2" stroke-width="1.9"/></svg>
<svg style="left:534px;top:2.6px" width="15" height="13" viewBox="0 0 15 13"><g stroke="#c8c8c8" stroke-width="1.7"><path d="M5.3 .2V2.4M5.3 8.4V10.6M.1 5.4H2.3M8.3 5.4H10.5M1.6 1.7 3.2 3.3M7.4 7.5 9 9.1M9 1.7 7.4 3.3M3.2 7.5 1.6 9.1"/></g><circle cx="5.3" cy="5.4" r="2.7" fill="none" stroke="#c8c8c8" stroke-width="1.5"/><path d="M10.3 8.3H14L12.15 11.3Z" fill="#c8c8c8"/></svg>
</div>
<div class="sep" style="top:98.1px"></div>
<div class="ir" style="top:100.5px">
<svg style="left:3.2px;top:5.2px" width="9" height="8"><use href="#td"/></svg>
<svg style="left:13.8px;top:3.5px" width="15" height="11" viewBox="0 0 15 11"><rect x=".8" y=".8" width="13.4" height="9.4" rx="1" fill="#dcdce2" stroke="#f0a02c" stroke-width="1.5"/><rect x="2.6" y="4" width="9.8" height="3" rx="1.5" fill="#fff" stroke="#444" stroke-width=".8"/><rect x="3" y="4.4" width="4.5" height="2.2" fill="#f09a20"/><circle cx="8.3" cy="5.5" r="1.9" fill="#fff" stroke="#444" stroke-width=".8"/></svg>
<div class="cb" style="left:32.2px;top:2.6px"><svg style="left:.5px;top:-2px" width="13" height="12" viewBox="0 0 13 12"><path d="M1.6 6.4 4.4 10 11 1" fill="none" stroke="#f4f4f4" stroke-width="2"/></svg></div>
<span class="b" style="left:47.5px;color:#c8c8c8">Slider (Script)</span>
<svg style="left:498px;top:1.8px" width="13" height="14" viewBox="0 0 13 14"><defs><linearGradient id="bk" x1="0" y1="0" x2="1" y2="1"><stop offset="0" stop-color="#5f86be"/><stop offset="1" stop-color="#263f6b"/></linearGradient></defs><path d="M1 1.8 10.5 .4 12.3 1.2V12.6L2.6 13.6 1 12.6Z" fill="#1c2a40"/><path d="M10.6 .9 11.8 1.5V12.2L10.6 12.6Z" fill="#e8eef6"/><path d="M1.5 2.1 10.4 .9V12.5L1.5 13Z" fill="url(#bk)"/><path d="M4.4 5.2Q4.4 3.6 6 3.6Q7.7 3.6 7.7 5.1Q7.7 6.1 6.1 6.8V8M6.1 9.2V10.4" stroke="#b5cbe8" stroke-width="1.3" fill="none"/></svg>
<svg style="left:517px;top:3px" width="11" height="12" viewBox="0 0 11 12"><path d="M.3 3H7.2M.3 8.6H3.6M6.8 8.6H10.5" stroke="#c2c2c2" stroke-width="1.3"/><path d="M9.3 .3V5.6" stroke="#c2c2c2" stroke-width="1.5"/><path d="M5.2 6V11.4" stroke="#c2c2c2" stroke-width="1.9"/></svg>
<svg style="left:534px;top:2.6px" width="15" height="13" viewBox="0 0 15 13"><g stroke="#c8c8c8" stroke-width="1.7"><path d="M5.3 .2V2.4M5.3 8.4V10.6M.1 5.4H2.3M8.3 5.4H10.5M1.6 1.7 3.2 3.3M7.4 7.5 9 9.1M9 1.7 7.4 3.3M3.2 7.5 1.6 9.1"/></g><circle cx="5.3" cy="5.4" r="2.7" fill="none" stroke="#c8c8c8" stroke-width="1.5"/><path d="M10.3 8.3H14L12.15 11.3Z" fill="#c8c8c8"/></svg>
</div>
<span style="left:13.5px;top:116.1px;line-height:17.78px">Interactable</span>
<div class="cb" style="left:220px;top:118.7px"><svg style="left:.5px;top:-2px" width="13" height="12" viewBox="0 0 13 12"><path d="M1.6 6.4 4.4 10 11 1" fill="none" stroke="#f4f4f4" stroke-width="2"/></svg></div>
<span style="left:13.5px;top:134.1px;line-height:17.78px">Transition</span>
<div class="pop" style="left:220px;top:135.6px;width:324.5px">Color Tint</div><svg style="left:534px;top:139px" width="4.6" height="7.4" viewBox="0 0 5 8"><path d="M0 3.2H5L2.5 .2ZM0 4.8H5L2.5 7.8Z" fill="#a8a8a8"/></svg>
<span style="left:28.3px;top:152.3px;line-height:17.78px">Target Graphic</span>
<div class="of" style="left:220px;top:153.6px;width:307px"><span style="left:15px;top:-.5px">Handle (Image)</span><svg style="left:2.5px;top:1px" width="11" height="11" viewBox="0 0 11 11"><rect width="11" height="11" fill="#e07a1a"/><rect x="1" y="1" width="9" height="9" fill="#f5c38a"/><rect x="1" y="1" width="4.5" height="4.5" fill="#fff"/><rect x="5.5" y="5.5" width="4.5" height="4.5" fill="#fff"/><rect x="5.5" y="1" width="4.5" height="4.5" fill="#e08a3a"/></svg></div>
<div style="left:527px;top:153.6px;width:17px;height:14.8px;background:#3c3c3c"></div><svg style="left:533.5px;top:156.7px" width="9" height="9" viewBox="0 0 9 9"><circle cx="4.5" cy="4.5" r="3.6" fill="none" stroke="#a0a0a0" stroke-width="1"/><circle cx="4.5" cy="4.5" r="1.2" fill="#a0a0a0"/></svg>
<span style="left:28.3px;top:169.9px;line-height:17.78px">Normal Color</span>
<div class="col" style="left:220px;top:171.2px;width:307px;background:#fff"><div style="left:0;bottom:0;width:100%;height:2.5px;background:#000"></div><div style="left:0;bottom:0;width:100%;height:2.5px;background:#fff"></div></div>
<svg style="left:530.5px;top:171.8px" width="14" height="14" viewBox="0 0 14 14"><path d="M1 13 2 10 9 3 11 5 4 12Z" fill="#ddd" stroke="#222" stroke-width=".6"/><path d="M8.5 2 10.5 .5 13.5 3.5 12 5.5Z" fill="#222" stroke="#aaa" stroke-width=".5"/></svg>
<span style="left:28.3px;top:187.5px;line-height:17.78px">Highlighted Color</span>
<div class="col" style="left:220px;top:188.8px;width:307px;background:#f5f5f5"><div style="left:0;bottom:0;width:100%;height:2.5px;background:#000"></div><div style="left:0;bottom:0;width:100%;height:2.5px;background:#fff"></div></div>
<svg style="left:530.5px;top:189.4px" width="14" height="14" viewBox="0 0 14 14"><path d="M1 13 2 10 9 3 11 5 4 12Z" fill="#ddd" stroke="#222" stroke-width=".6"/><path d="M8.5 2 10.5 .5 13.5 3.5 12 5.5Z" fill="#222" stroke="#aaa" stroke-width=".5"/></svg>
<span style="left:28.3px;top:204.9px;line-height:17.78px">Pressed Color</span>
<div class="col" style="left:220px;top:206.2px;width:307px;background:#c8c8c8"><div style="left:0;bottom:0;width:100%;height:2.5px;background:#000"></div><div style="left:0;bottom:0;width:100%;height:2.5px;background:#fff"></div></div>
<svg style="left:530.5px;top:206.8px" width="14" height="14" viewBox="0 0 14 14"><path d="M1 13 2 10 9 3 11 5 4 12Z" fill="#ddd" stroke="#222" stroke-width=".6"/><path d="M8.5 2 10.5 .5 13.5 3.5 12 5.5Z" fill="#222" stroke="#aaa" stroke-width=".5"/></svg>
<span style="left:28.3px;top:222.7px;line-height:17.78px">Disabled Color</span>
<div class="col" style="left:220px;top:224.0px;width:307px;background:#c8c8c8"><div style="left:0;bottom:0;width:100%;height:2.5px;background:#000"></div><div style="left:0;bottom:0;width:50.0%;height:2.5px;background:#fff"></div></div>
<svg style="left:530.5px;top:224.6px" width="14" height="14" viewBox="0 0 14 14"><path d="M1 13 2 10 9 3 11 5 4 12Z" fill="#ddd" stroke="#222" stroke-width=".6"/><path d="M8.5 2 10.5 .5 13.5 3.5 12 5.5Z" fill="#222" stroke="#aaa" stroke-width=".5"/></svg>
<span style="left:28.3px;top:241.3px;line-height:17.78px">Color Multiplier</span>
<div style="left:221px;top:249.0px;width:269px;height:2.6px;background:#2a2a2a;border-radius:1.5px;box-shadow:0 1px 0 #444"></div>
<div style="left:219px;top:245.0px;width:10.5px;height:10.5px;border-radius:50%;background:radial-gradient(circle at 40% 35%,#777,#4e4e4e);border:1px solid #222"></div>
<div class="tf" style="left:496px;top:242.6px;width:48px">1</div>
<span style="left:28.3px;top:259.0px;line-height:17.78px">Fade Duration</span>
<div class="tf" style="left:220px;top:260.3px;width:324.5px">0.1</div>
<span style="left:13.5px;top:284.1px;line-height:17.78px">Navigation</span>
<div class="pop" style="left:220px;top:285.6px;width:324.5px">Automatic</div><svg style="left:534px;top:289px" width="4.6" height="7.4" viewBox="0 0 5 8"><path d="M0 3.2H5L2.5 .2ZM0 4.8H5L2.5 7.8Z" fill="#a8a8a8"/></svg>
<div class="btn" style="left:220px;top:307px;width:324.5px">Visualize</div>
<span style="left:13.5px;top:330.1px;line-height:17.78px">Fill Rect</span>
<div class="of" style="left:220px;top:331.4px;width:307px"><span style="left:15px;top:-.5px">Fill (Rect Transform)</span><svg style="left:2.5px;top:1px" width="11" height="11" viewBox="0 0 11 11"><path d="M.8 1 4.4 2 2 4.4ZM10.2 1 6.6 2 9 4.4ZM.8 10 4.4 9 2 6.6ZM10.2 10 6.6 9 9 6.6Z" fill="#e4e4e4"/></svg></div>
<div style="left:527px;top:331.4px;width:17px;height:14.8px;background:#3c3c3c"></div><svg style="left:533.5px;top:334.5px" width="9" height="9" viewBox="0 0 9 9"><circle cx="4.5" cy="4.5" r="3.6" fill="none" stroke="#a0a0a0" stroke-width="1"/><circle cx="4.5" cy="4.5" r="1.2" fill="#a0a0a0"/></svg>
<span style="left:13.5px;top:347.6px;line-height:17.78px">Handle Rect</span>
<div class="of" style="left:220px;top:348.9px;width:307px"><span style="left:15px;top:-.5px">Handle (Rect Transform)</span><svg style="left:2.5px;top:1px" width="11" height="11" viewBox="0 0 11 11"><path d="M.8 1 4.4 2 2 4.4ZM10.2 1 6.6 2 9 4.4ZM.8 10 4.4 9 2 6.6ZM10.2 10 6.6 9 9 6.6Z" fill="#e4e4e4"/></svg></div>
<div style="left:527px;top:348.9px;width:17px;height:14.8px;background:#3c3c3c"></div><svg style="left:533.5px;top:352.0px" width="9" height="9" viewBox="0 0 9 9"><circle cx="4.5" cy="4.5" r="3.6" fill="none" stroke="#a0a0a0" stroke-width="1"/><circle cx="4.5" cy="4.5" r="1.2" fill="#a0a0a0"/></svg>
<span style="left:13.5px;top:373.3px;line-height:17.78px">Direction</span>
<div class="pop" style="left:220px;top:374.8px;width:324.5px">Left To Right</div><svg style="left:534px;top:378.2px" width="4.6" height="7.4" viewBox="0 0 5 8"><path d="M0 3.2H5L2.5 .2ZM0 4.8H5L2.5 7.8Z" fill="#a8a8a8"/></svg>
<span style="left:13.5px;top:391.1px;line-height:17.78px">Min Value</span>
<div class="tf" style="left:220px;top:392.4px;width:324.5px">0</div>
<span style="left:13.5px;top:408.6px;line-height:17.78px">Max Value</span>
<div class="tf" style="left:220px;top:409.9px;width:324.5px">5</div>
<span style="left:13.5px;top:426.5px;line-height:17.78px">Whole Numbers</span>
<div class="cb" style="left:220px;top:429.09999999999997px"><svg style="left:.5px;top:-2px" width="13" height="12" viewBox="0 0 13 12"><path d="M1.6 6.4 4.4 10 11 1" fill="none" stroke="#f4f4f4" stroke-width="2"/></svg></div>
<span style="left:13.5px;top:443.9px;line-height:17.78px">Value</span>
<div style="left:221px;top:451.6px;width:269px;height:2.6px;background:#2a2a2a;border-radius:1.5px;box-shadow:0 1px 0 #444"></div>
<div style="left:219px;top:447.6px;width:10.5px;height:10.5px;border-radius:50%;background:radial-gradient(circle at 40% 35%,#777,#4e4e4e);border:1px solid #222"></div>
<div class="tf" style="left:496px;top:445.2px;width:48px">0</div>
<div style="left:12px;top:479.5px;width:532.5px;height:17px;background:linear-gradient(#5c5c5c,#545454);border:1px solid #303030;border-radius:3px 3px 0 0;line-height:15px"><span style="left:6.8px">On Value Changed (Single)</span></div>
<div style="left:12px;top:496px;width:532.5px;height:47.5px;background:linear-gradient(#4d4d4d 0,#4d4d4d 43px,#585858 43px);border:1px solid #303030;border-top:1px solid #3a3a3a;border-radius:0 0 3px 3px"></div>
<div class="pop" style="left:18px;top:502px;width:154.5px">Runtime Only</div><svg style="left:162.5px;top:505.5px" width="4.6" height="7.4" viewBox="0 0 5 8"><path d="M0 3.2H5L2.5 .2ZM0 4.8H5L2.5 7.8Z" fill="#a8a8a8"/></svg>
<div class="pop" style="left:180px;top:502px;width:359px">DNASlot.ValueChanged</div><svg style="left:529px;top:505.5px" width="4.6" height="7.4" viewBox="0 0 5 8"><path d="M0 3.2H5L2.5 .2ZM0 4.8H5L2.5 7.8Z" fill="#a8a8a8"/></svg>
<div class="of" style="left:17.5px;top:519.5px;width:139px"><span style="left:15px;top:-.5px">Slider (DNASlot)</span><svg style="left:3.5px;top:1px;opacity:1" width="10" height="12" viewBox="0 0 10 12"><path d="M.5 .5H6.5L9.5 3.5V11.5H.5Z" fill="#e4e4e4" stroke="#666" stroke-width=".6"/><rect x="1.8" y="5" width="5.5" height="4.6" fill="#3a79c8"/><path d="M5.5 6.4Q3.2 5.8 3.2 7.3Q3.2 8.8 5.5 8.2" fill="none" stroke="#fff" stroke-width=".8"/></svg></div>
<div style="left:156.5px;top:519.5px;width:17px;height:14.8px;background:#535353"></div><svg style="left:162.5px;top:523px" width="9" height="9" viewBox="0 0 9 9"><circle cx="4.5" cy="4.5" r="3.6" fill="none" stroke="#a0a0a0" stroke-width="1"/><circle cx="4.5" cy="4.5" r="1.2" fill="#a0a0a0"/></svg>
<div style="left:490px;top:543.5px;width:54.5px;height:14.5px;background:#4d4d4d;border:1px solid #2c2c2c;border-top:0;border-radius:0 0 3px 3px"></div>
<svg style="left:498px;top:546px" width="40" height="9" viewBox="0 0 40 9"><path d="M1 4.5H9M5 .5V8.5M26.5 4.5H34.5" stroke="#c8c8c8" stroke-width="1.6"/></svg>
<div class="sep" style="top:561.9px"></div>
<div class="ir" style="top:564.3px">
<svg style="left:3.2px;top:5.2px" width="9" height="8"><use href="#td"/></svg>
<svg style="left:16px;top:2px" width="12" height="14" viewBox="0 0 10 12"><path d="M.5 .5H6.5L9.5 3.5V11.5H.5Z" fill="#e8e8e8" stroke="#666" stroke-width=".6"/><rect x="1.8" y="5" width="5.5" height="4.6" fill="#3a79c8"/><path d="M5.5 6.4Q3.2 5.8 3.2 7.3Q3.2 8.8 5.5 8.2" fill="none" stroke="#fff" stroke-width=".8"/></svg>
<div class="cb" style="left:32.2px;top:2.6px"><svg style="left:.5px;top:-2px" width="13" height="12" viewBox="0 0 13 12"><path d="M1.6 6.4 4.4 10 11 1" fill="none" stroke="#f4f4f4" stroke-width="2"/></svg></div>
<span class="b" style="left:47.5px;color:#c8c8c8">DNA Slot (Script)</span>
<svg style="left:498px;top:1.8px" width="13" height="14" viewBox="0 0 13 14"><defs><linearGradient id="bk" x1="0" y1="0" x2="1" y2="1"><stop offset="0" stop-color="#5f86be"/><stop offset="1" stop-color="#263f6b"/></linearGradient></defs><path d="M1 1.8 10.5 .4 12.3 1.2V12.6L2.6 13.6 1 12.6Z" fill="#1c2a40"/><path d="M10.6 .9 11.8 1.5V12.2L10.6 12.6Z" fill="#e8eef6"/><path d="M1.5 2.1 10.4 .9V12.5L1.5 13Z" fill="url(#bk)"/><path d="M4.4 5.2Q4.4 3.6 6 3.6Q7.7 3.6 7.7 5.1Q7.7 6.1 6.1 6.8V8M6.1 9.2V10.4" stroke="#b5cbe8" stroke-width="1.3" fill="none"/></svg>
<svg style="left:517px;top:3px" width="11" height="12" viewBox="0 0 11 12"><path d="M.3 3H7.2M.3 8.6H3.6M6.8 8.6H10.5" stroke="#c2c2c2" stroke-width="1.3"/><path d="M9.3 .3V5.6" stroke="#c2c2c2" stroke-width="1.5"/><path d="M5.2 6V11.4" stroke="#c2c2c2" stroke-width="1.9"/></svg>
<svg style="left:534px;top:2.6px" width="15" height="13" viewBox="0 0 15 13"><g stroke="#c8c8c8" stroke-width="1.7"><path d="M5.3 .2V2.4M5.3 8.4V10.6M.1 5.4H2.3M8.3 5.4H10.5M1.6 1.7 3.2 3.3M7.4 7.5 9 9.1M9 1.7 7.4 3.3M3.2 7.5 1.6 9.1"/></g><circle cx="5.3" cy="5.4" r="2.7" fill="none" stroke="#c8c8c8" stroke-width="1.5"/><path d="M10.3 8.3H14L12.15 11.3Z" fill="#c8c8c8"/></svg>
</div>
<span style="left:13.5px;top:580.3px;line-height:17.78px" class=dim>Script</span>
<div class="of" style="left:220px;top:581.6px;width:307px"><span style="left:15px;top:-.5px" class=dim>DNASlot</span><svg style="left:2.5px;top:1px;opacity:0.6" width="10" height="12" viewBox="0 0 10 12"><path d="M.5 .5H6.5L9.5 3.5V11.5H.5Z" fill="#e4e4e4" stroke="#666" stroke-width=".6"/><rect x="1.8" y="5" width="5.5" height="4.6" fill="#3a79c8"/><path d="M5.5 6.4Q3.2 5.8 3.2 7.3Q3.2 8.8 5.5 8.2" fill="none" stroke="#fff" stroke-width=".8"/></svg></div>
<div style="left:527px;top:581.6px;width:17px;height:14.8px;background:#3c3c3c"></div><svg style="left:533.5px;top:584.7px" width="9" height="9" viewBox="0 0 9 9"><circle cx="4.5" cy="4.5" r="3.6" fill="none" stroke="#a0a0a0" stroke-width="1"/><circle cx="4.5" cy="4.5" r="1.2" fill="#a0a0a0"/></svg>
<span style="left:13.5px;top:598.1px;line-height:17.78px">Slot</span>
<div class="tf" style="left:220px;top:599.4px;width:324.5px">Hair</div>
<svg style="left:1.9px;top:621.2px" width="9" height="8" viewBox="0 0 9 8"><path d="M.2 .3H8.8L4.5 7.8Z" fill="#747474"/></svg>
<span style="left:13.5px;top:615.9px;line-height:17.78px">Alternatives</span>
<span style="left:28.3px;top:633.7px;line-height:17.78px">Size</span>
<div class="tf" style="left:220px;top:635.0px;width:324.5px">3</div>
<svg style="left:17.0px;top:655.9px" width="8" height="9" viewBox="0 0 8 9"><path d="M.3 .2 7.8 4.5 .3 8.8Z" fill="#747474"/></svg>
<span style="left:28.3px;top:651.4px;line-height:17.78px">Element 0</span>
<svg style="left:16.7px;top:674.4px" width="9" height="8" viewBox="0 0 9 8"><path d="M.2 .3H8.8L4.5 7.8Z" fill="#747474"/></svg>
<span style="left:28.3px;top:669.1px;line-height:17.78px">Element 1</span>
<svg style="left:31.6px;top:692.2px" width="9" height="8" viewBox="0 0 9 8"><path d="M.2 .3H8.8L4.5 7.8Z" fill="#747474"/></svg>
<span style="left:43.2px;top:686.9px;line-height:17.78px">Race Recipes</span>
<span style="left:58px;top:704.7px;line-height:17.78px">Size</span>
<div class="tf" style="left:220px;top:706.0px;width:324.5px">3</div>
<svg style="left:46.7px;top:726.9px" width="8" height="9" viewBox="0 0 8 9"><path d="M.3 .2 7.8 4.5 .3 8.8Z" fill="#4f7de8"/></svg>
<span style="left:58px;top:722.4px;line-height:17.78px;color:#4f7de8">HumanMaleDCS</span>
<svg style="left:46.7px;top:744.6px" width="8" height="9" viewBox="0 0 8 9"><path d="M.3 .2 7.8 4.5 .3 8.8Z" fill="#747474"/></svg>
<span style="left:58px;top:740.1px;line-height:17.78px">HumanFemaleDCS</span>
<svg style="left:46.4px;top:763.2px" width="9" height="8" viewBox="0 0 9 8"><path d="M.2 .3H8.8L4.5 7.8Z" fill="#747474"/></svg>
<span style="left:58px;top:757.9px;line-height:17.78px">OgreMaleDCS</span>
<span style="left:73px;top:775.8px;line-height:17.78px">Race</span>
<div class="tf" style="left:220px;top:777.1px;width:324.5px">OgreMaleDCS</div>
<span style="left:73px;top:794.2px;line-height:17.78px">Recipe</span>
<div class="tf" style="left:220px;top:795.5px;width:324.5px">M_Ogre_Hair_Recipe</div>
<svg style="left:17.0px;top:815.8px" width="8" height="9" viewBox="0 0 8 9"><path d="M.3 .2 7.8 4.5 .3 8.8Z" fill="#747474"/></svg>
<span style="left:28.3px;top:811.3px;line-height:17.78px">Element 2</span>
<span style="left:13.5px;top:829.1px;line-height:17.78px">Slider</span>
<div class="of" style="left:220px;top:830.4px;width:307px"><span style="left:15px;top:-.5px">Slider (Slider)</span><svg style="left:2.5px;top:1px" width="12" height="9" viewBox="0 0 12 9"><rect x=".6" y=".6" width="10.8" height="7.8" fill="#f0e4d0" stroke="#e08a1e" stroke-width="1.2"/><path d="M2 4.5H10" stroke="#333" stroke-width="1.2"/><circle cx="7" cy="4.5" r="1.7" fill="#333"/></svg></div>
<div style="left:527px;top:830.4px;width:17px;height:14.8px;background:#3c3c3c"></div><svg style="left:533.5px;top:833.5px" width="9" height="9" viewBox="0 0 9 9"><circle cx="4.5" cy="4.5" r="3.6" fill="none" stroke="#a0a0a0" stroke-width="1"/><circle cx="4.5" cy="4.5" r="1.2" fill="#a0a0a0"/></svg>
<span style="left:13.5px;top:846.9px;line-height:17.78px">Panel</span>
<div class="of" style="left:220px;top:848.2px;width:307px"><span style="left:15px;top:-.5px">StylePanel (DNASliderPanel)</span><svg style="left:2.5px;top:1px;opacity:1" width="10" height="12" viewBox="0 0 10 12"><path d="M.5 .5H6.5L9.5 3.5V11.5H.5Z" fill="#e4e4e4" stroke="#666" stroke-width=".6"/><rect x="1.8" y="5" width="5.5" height="4.6" fill="#3a79c8"/><path d="M5.5 6.4Q3.2 5.8 3.2 7.3Q3.2 8.8 5.5 8.2" fill="none" stroke="#fff" stroke-width=".8"/></svg></div>
<div style="left:527px;top:848.2px;width:17px;height:14.8px;background:#3c3c3c"></div><svg style="left:533.5px;top:851.3px" width="9" height="9" viewBox="0 0 9 9"><circle cx="4.5" cy="4.5" r="3.6" fill="none" stroke="#a0a0a0" stroke-width="1"/><circle cx="4.5" cy="4.5" r="1.2" fill="#a0a0a0"/></svg>
<div class="sep" style="top:867.2px"></div>
<div class="btn" style="left:158.5px;top:877.2px;width:225.5px;height:22.2px;line-height:19.4px;font-size:11.85px;border-radius:3px;color:#b4b4b4;background:linear-gradient(#5a5a5a,#404040)">Add Component</div>
</div>
<svg style="left:0;top:0;filter:drop-shadow(0 0 1.5px rgba(0,0,0,.55))" width="1361" height="937" viewBox="0 0 1361 937"><rect x="205.8" y="67.6" width="301.3" height="20.6" rx="6" fill="none" stroke="#e31313" stroke-width="2.5"/><rect x="512.3" y="897" width="279.3" height="24.6" rx="6" fill="none" stroke="#e31313" stroke-width="2.6"/><rect x="812.9" y="761" width="546" height="55.8" rx="6" fill="none" stroke="#e31313" stroke-width="2.1"/><path d="M500.3 90 502.3 88.6 1021.7 782.4 1024.8 777.4 1031 805.4 1005.9 791.3 1012.3 789.9Z" fill="#ff0000"/></svg>
</div>
</body></html>
